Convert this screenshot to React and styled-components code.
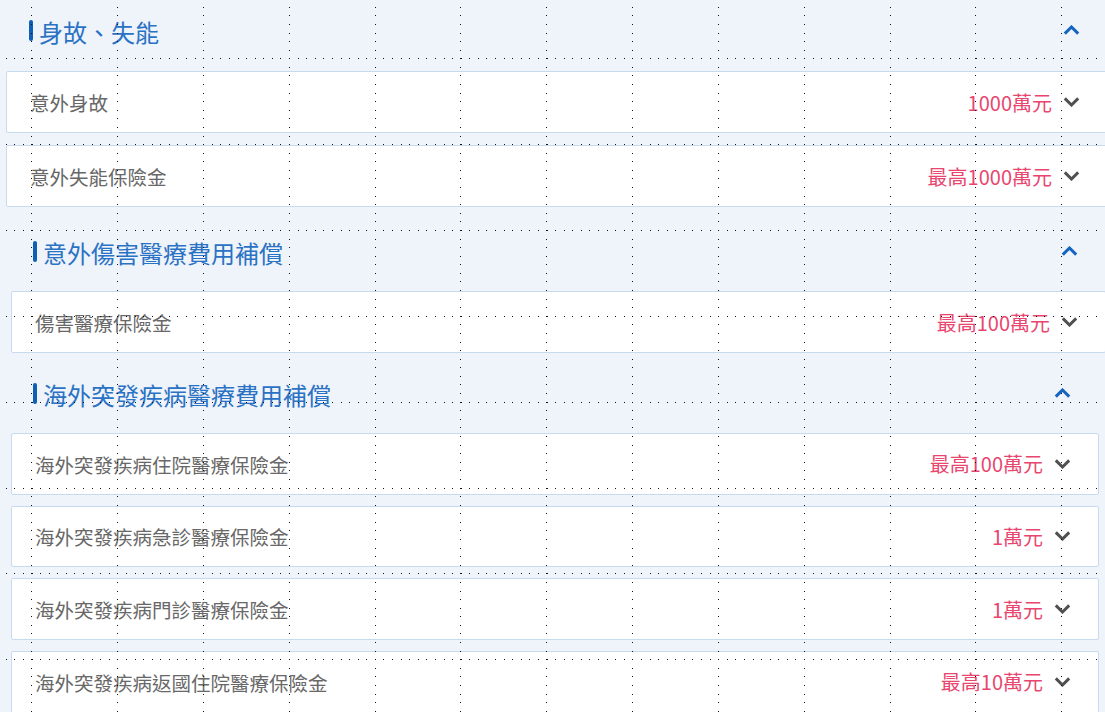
import React from 'react';
import styled, { createGlobalStyle } from 'styled-components';

const Global = createGlobalStyle`
  html, body { margin: 0; padding: 0; background: #eff3fa; }
  body {
    font-family: "Noto Sans CJK TC", "Noto Sans", sans-serif;
    overflow: hidden;
  }
`;

const Page = styled.div`
  width: 1105px;
  height: 712px;
  overflow: hidden;
  display: flex;
  flex-direction: column;
  background: #eff3fa;
`;

const Section = styled.section`
  display: flex;
  flex-direction: column;
  flex-shrink: 0;
  margin: ${p => p.$top}px ${p => p.$right}px 0 ${p => p.$left}px;
`;

const Header = styled.div`
  height: 56px;
  display: flex;
  align-items: center;
  gap: 6px;
  padding: 0 28px 0 ${p => p.$pad}px;
`;

const Bar = styled.span`
  width: 4px;
  height: 21px;
  border-radius: 2px;
  background: #0f5fb5;
  flex-shrink: 0;
`;

const Title = styled.h2`
  flex: 1;
  margin: 0;
  font-size: 24px;
  font-weight: 400;
  line-height: 1;
  color: #2a72c4;
  padding-top: 3px;
`;

const List = styled.div`
  display: flex;
  flex-direction: column;
  gap: ${p => p.$gap}px;
  margin-top: ${p => p.$mt}px;
`;

const Card = styled.div`
  box-sizing: border-box;
  height: ${p => p.$h}px;
  background: #fff;
  border: 1px solid #c8daef;
  border-radius: 2px;
  display: flex;
  align-items: center;
  padding: 0 27px 0 23px;
`;

const Label = styled.span`
  flex: 1;
  font-size: 19.5px;
  color: #686868;
  white-space: nowrap;
  padding-top: 1px;
`;

const Amount = styled.span`
  font-size: 20px;
  color: #e8466f;
  margin-right: 11px;
  white-space: nowrap;
`;

const Chevron = ({ up, color }) => (
  <svg width="17" height="10" viewBox="0 0 17 10" style={{ flexShrink: 0 }}>
    <path
      d={up ? 'M1.8 8.6 L8.5 2 L15.2 8.6' : 'M1.8 1.4 L8.5 8 L15.2 1.4'}
      fill="none"
      stroke={color}
      strokeWidth="3"
      strokeLinejoin="miter"
    />
  </svg>
);

const Overlay = styled.svg`
  position: fixed;
  left: 0;
  top: 0;
  width: 1105px;
  height: 712px;
  pointer-events: none;
  z-index: 10;
`;

const GridDots = () => {
  const dots = [];
  const cell = 85.84;
  const step = cell / 10;
  for (let k = 0; k < 13; k++) {
    const x = Math.round(31.2 + k * cell);
    for (let j = -7; j < 80; j++) {
      const y = Math.round(58.3 + j * step);
      if (y < 0 || y > 712) continue;
      dots.push(<rect key={`v${k}_${j}`} x={x} y={y} width="1" height="1" />);
    }
  }
  for (let k = 0; k < 8; k++) {
    const y = Math.round(58.3 + k * cell);
    for (let i = -4; i < 126; i++) {
      const x = Math.round(31.5 + i * step);
      if (x < 0 || x > 1105) continue;
      dots.push(<rect key={`h${k}_${i}`} x={x} y={y} width="1" height="1" />);
    }
  }
  return (
    <Overlay viewBox="0 0 1105 712" shapeRendering="crispEdges" fill="#111">
      {dots}
    </Overlay>
  );
};

const sections = [
  {
    title: '身故、失能',
    top: 2, left: 6, right: -3, pad: 23, mt: 13, gap: 12, h: 62,
    rows: [
      ['意外身故', '1000萬元'],
      ['意外失能保險金', '最高1000萬元'],
    ],
  },
  {
    title: '意外傷害醫療費用補償',
    top: 16, left: 11, right: -1, pad: 22, mt: 12, gap: 12, h: 62,
    rows: [['傷害醫療保險金', '最高100萬元']],
  },
  {
    title: '海外突發疾病醫療費用補償',
    top: 12, left: 11, right: 6, pad: 22, mt: 12, gap: 11.2, h: 61.5,
    rows: [
      ['海外突發疾病住院醫療保險金', '最高100萬元'],
      ['海外突發疾病急診醫療保險金', '1萬元'],
      ['海外突發疾病門診醫療保險金', '1萬元'],
      ['海外突發疾病返國住院醫療保險金', '最高10萬元'],
    ],
  },
];

export default function App() {
  return (
    <>
      <Global />
      <Page>
        {sections.map(s => (
          <Section key={s.title} $top={s.top} $left={s.left} $right={s.right}>
            <Header $pad={s.pad}>
              <Bar />
              <Title>{s.title}</Title>
              <Chevron up color="#1565c0" />
            </Header>
            <List $gap={s.gap} $mt={s.mt}>
              {s.rows.map(([label, amount]) => (
                <Card key={label} $h={s.h}>
                  <Label>{label}</Label>
                  <Amount>{amount}</Amount>
                  <Chevron color="#505050" />
                </Card>
              ))}
            </List>
          </Section>
        ))}
      </Page>
      <GridDots />
    </>
  );
}
